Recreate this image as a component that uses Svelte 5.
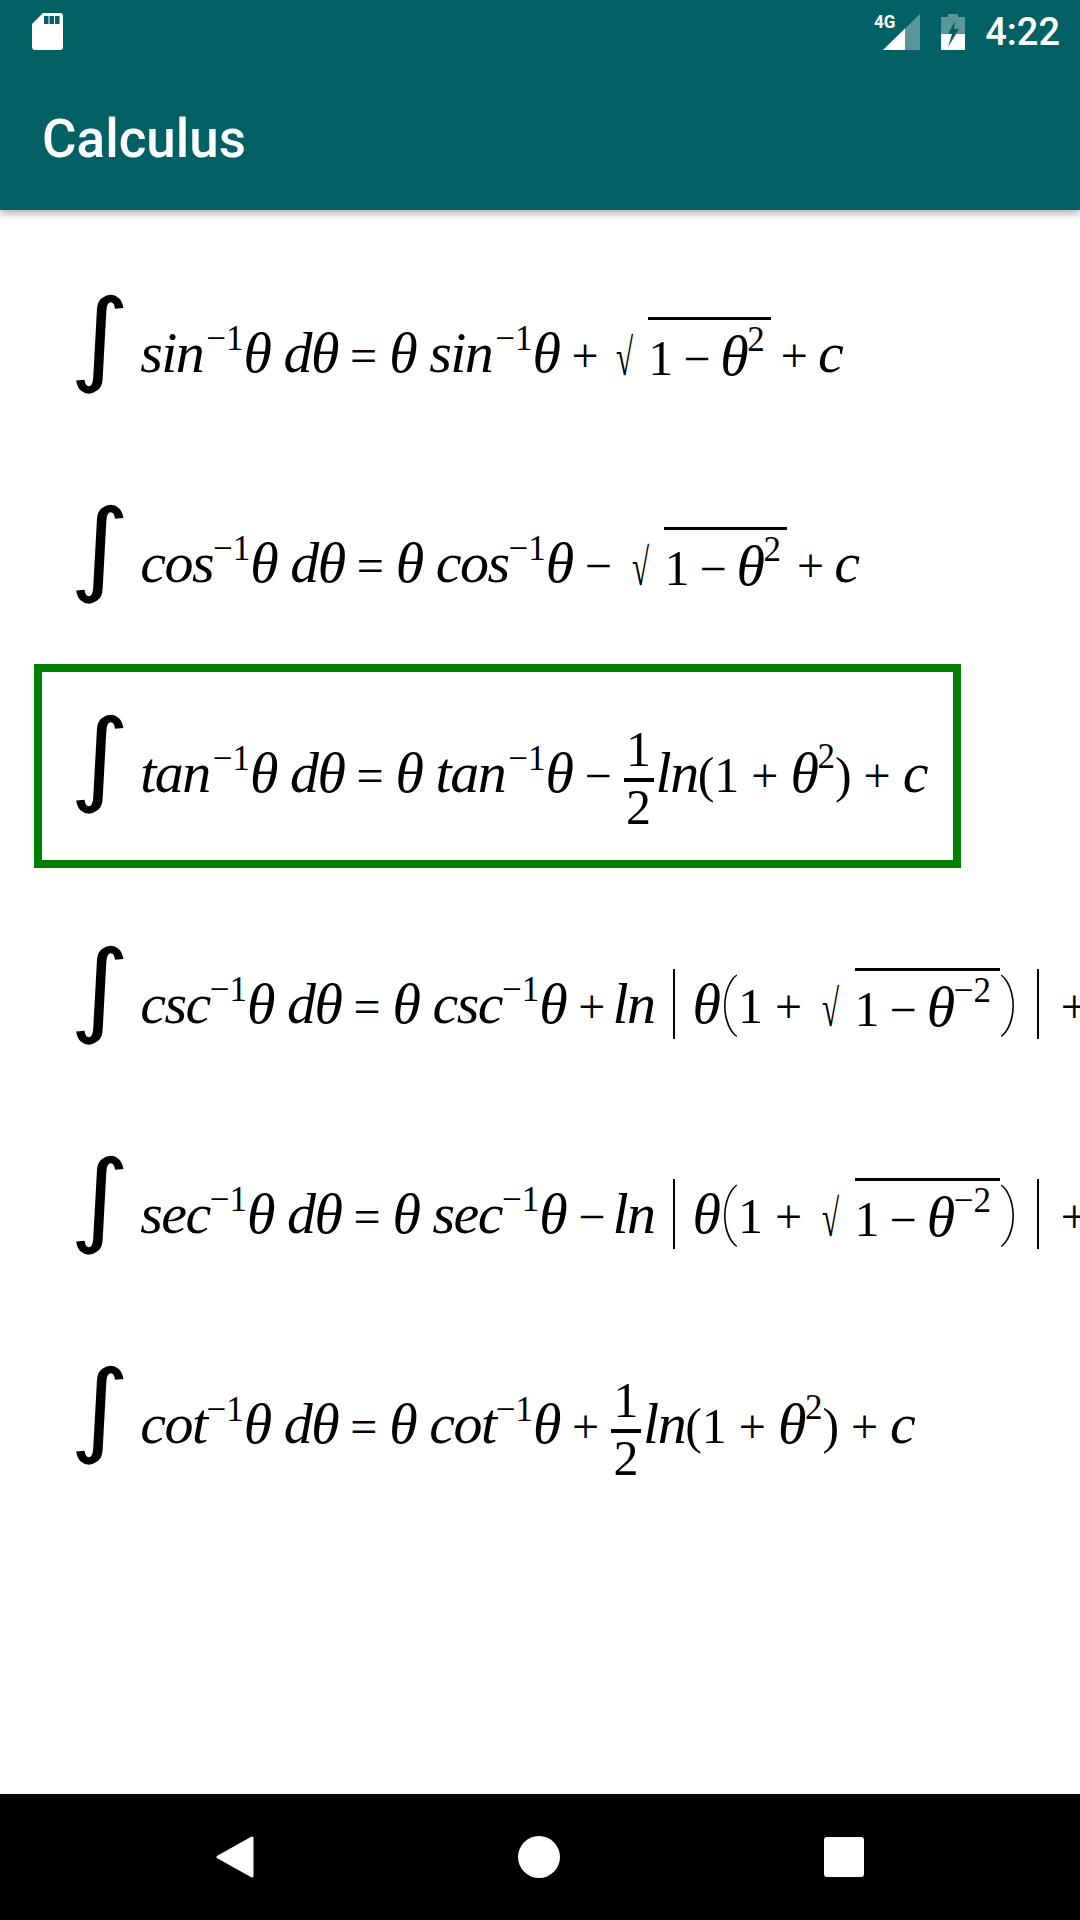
<script lang="ts">
	const bars = [0, 1, 2];
</script>

<div class="screen">
	<header class="appbar">
		<div class="status">
			<svg class="sd" viewBox="0 0 31 37" width="31" height="37">
				<path fill="#fff" d="M11 0h17a3 3 0 0 1 3 3v31a3 3 0 0 1-3 3H3a3 3 0 0 1-3-3V11z" />
				{#each bars as b}
					<rect x={12 + b * 5.5} y="3" width="4.5" height="8" fill="#006064" />
				{/each}
			</svg>
			<div class="status-right">
				<span class="net">4G</span>
				<svg class="signal" viewBox="0 0 37 36" width="37" height="36">
					<path fill="#fff" fill-opacity="0.35" d="M37 0v36H0z" />
					<path fill="#fff" d="M22 14.5V36H0z" />
				</svg>
				<svg class="battery" viewBox="0 0 24 36" width="24" height="36">
					<path fill="#fff" fill-opacity="0.35" d="M7 0h10v3h7v17H0V3h7z" />
					<path fill="#fff" d="M0 20h24v16H0z" />
					<path fill="#006064" d="M14 7L7 20h4l-4 13 11-18h-5z" />
				</svg>
				<span class="time">4:22</span>
			</div>
		</div>
		<h1 class="title">Calculus</h1>
	</header>

	<main class="list">
		<div class="eq wide-sup">
			<span class="int">∫</span>
			<i>sin</i><sup>−1</sup><i>θ dθ</i><span class="op">=</span><i>θ sin</i><sup>−1</sup><i>θ</i><span class="op">+</span>
			<span class="rad">√</span><span class="over">1<span class="op">−</span><i>θ</i><sup class="sq">2</sup></span><span class="op">+</span><i>c</i>
		</div>
		<div class="eq">
			<span class="int">∫</span>
			<i>cos</i><sup>−1</sup><i>θ dθ</i><span class="op">=</span><i>θ cos</i><sup>−1</sup><i>θ</i><span class="op">−</span>
			<span class="rad">√</span><span class="over">1<span class="op">−</span><i>θ</i><sup class="sq">2</sup></span><span class="op">+</span><i>c</i>
		</div>
		<div class="eq boxed wide-sup">
			<span class="int">∫</span>
			<i>tan</i><sup>−1</sup><i>θ dθ</i><span class="op">=</span><i>θ tan</i><sup>−1</sup><i>θ</i><span class="op">−</span>
			<span class="frac"><span class="num">1</span><span class="den">2</span></span><i class="ln">ln</i>(1<span class="op">+</span><i>θ</i><sup class="sq">2</sup>)<span class="op">+</span><i>c</i>
		</div>
		<div class="eq">
			<span class="int">∫</span>
			<i>csc</i><sup>−1</sup><i>θ dθ</i><span class="op">=</span><i>θ csc</i><sup>−1</sup><i>θ</i><span class="op">+</span><i class="log">ln</i>
			<span class="abs"></span><i>θ</i><span class="paren">(</span>1<span class="op">+</span>
			<span class="rad">√</span><span class="over long">1<span class="op">−</span><i>θ</i><sup class="sq">−2</sup></span><span class="paren">)</span>
			<span class="abs end"></span><span class="op">+</span>
		</div>
		<div class="eq">
			<span class="int">∫</span>
			<i>sec</i><sup>−1</sup><i>θ dθ</i><span class="op">=</span><i>θ sec</i><sup>−1</sup><i>θ</i><span class="op">−</span><i class="log">ln</i>
			<span class="abs"></span><i>θ</i><span class="paren">(</span>1<span class="op">+</span>
			<span class="rad">√</span><span class="over long">1<span class="op">−</span><i>θ</i><sup class="sq">−2</sup></span><span class="paren">)</span>
			<span class="abs end"></span><span class="op">+</span>
		</div>
		<div class="eq">
			<span class="int">∫</span>
			<i>cot</i><sup>−1</sup><i>θ dθ</i><span class="op">=</span><i>θ cot</i><sup>−1</sup><i>θ</i><span class="op">+</span>
			<span class="frac"><span class="num">1</span><span class="den">2</span></span><i class="ln">ln</i>(1<span class="op">+</span><i>θ</i><sup class="sq">2</sup>)<span class="op">+</span><i>c</i>
		</div>
	</main>

	<nav class="navbar">
		<svg viewBox="0 0 38 42" width="38" height="42">
			<path fill="#fff" stroke="#fff" stroke-width="3" stroke-linejoin="round" d="M36 2v38L2 21z" />
		</svg>
		<span class="home"></span>
		<span class="recent"></span>
	</nav>
</div>

<style>
	:global(body) {
		margin: 0;
		background: #fff;
	}

	.screen {
		width: 1080px;
		height: 1920px;
		display: flex;
		flex-direction: column;
		overflow: hidden;
	}

	.appbar {
		height: 210px;
		background: #006064;
		color: #fff;
		font-family: Roboto, sans-serif;
		box-shadow: 0 3px 8px rgba(0, 0, 0, 0.35);
		flex: none;
		position: relative;
		z-index: 1;
	}

	.status {
		height: 63px;
		display: flex;
		justify-content: space-between;
		align-items: center;
		padding: 0 20px 0 32px;
		box-sizing: border-box;
	}

	.status-right {
		display: flex;
		align-items: center;
		position: relative;
	}

	.signal {
		margin-right: 21px;
	}

	.net {
		position: absolute;
		left: -9px;
		top: -3px;
		font-size: 19px;
		font-weight: 700;
		transform: scaleX(0.9);
		transform-origin: left;
	}

	.battery {
		margin-right: 20px;
	}

	.time {
		font-size: 38px;
		font-weight: 500;
		line-height: 1;
	}

	.title {
		margin: 0;
		padding-left: 42px;
		font-size: 53px;
		font-weight: 500;
		line-height: 152px;
		height: 147px;
	}

	.list {
		flex: 1;
		padding-top: 34px;
		font-family: "Liberation Serif", serif;
		color: #000;
	}

	.eq {
		height: 204px;
		margin: 0 0 6px 34px;
		padding: 0 0 0 31px;
		border: 8px solid transparent;
		display: flex;
		align-items: baseline;
		font-size: 50px;
		white-space: pre;
		width: 1300px;
		box-sizing: border-box;
	}

	.boxed {
		border-color: #008000;
		width: 927px;
		margin-bottom: 27px;
	}

	.int {
		font-family: "DejaVu Sans", sans-serif;
		font-size: 102px;
		line-height: 169px;
		margin-right: 14px;
		transform: scaleX(1.14);
	}

	i {
		font-size: 58px;
		letter-spacing: -1.5px;
	}

	.ln {
		margin-left: 2px;
	}

	.log {
		margin-left: -5px;
	}

	sup {
		font-size: 35px;
		line-height: 0;
		position: relative;
		top: -22px;
	}

	.wide-sup > sup:not(.sq) {
		margin-left: 3px;
	}

	.sq {
		top: -24px;
	}

	.op {
		padding: 0 12px;
		font-size: 48px;
	}

	.over .op,
	.over + .op {
		padding: 0 10px;
	}

	.rad {
		font-size: 52px;
		margin: 0 2px 0 8px;
		transform: translateY(3px) scaleX(0.6);
		transform-origin: left;
	}

	.wide-sup .rad {
		margin-left: 5px;
	}

	.over {
		line-height: 72px;
		margin-left: 2px;
		padding-right: 6px;
		display: flex;
		align-items: baseline;
		border-top: 3px solid #000;
		transform: translateY(3px);
	}

	.over.long {
		padding-right: 9px;
	}

	.frac {
		display: inline-flex;
		flex-direction: column;
		align-items: stretch;
		text-align: center;
		line-height: 50px;
		width: 30px;
		transform: translateY(-26px);
	}

	.num {
		padding-bottom: 4px;
		border-bottom: 4px solid #000;
	}

	.abs {
		width: 2px;
		height: 70px;
		background: #000;
		margin: 0 18px;
		transform: translateY(16px);
	}

	.abs.end {
		margin-right: 10px;
	}

	.paren {
		font-family: Roboto, sans-serif;
		font-weight: 100;
		font-size: 62px;
	}

	.navbar {
		height: 126px;
		flex: none;
		background: #000;
		display: flex;
		align-items: center;
		justify-content: space-between;
		padding: 0 216px;
		box-sizing: border-box;
	}

	.home {
		width: 42px;
		height: 42px;
		border-radius: 50%;
		background: #fff;
	}

	.recent {
		width: 40px;
		height: 40px;
		border-radius: 3px;
		background: #fff;
	}
</style>
